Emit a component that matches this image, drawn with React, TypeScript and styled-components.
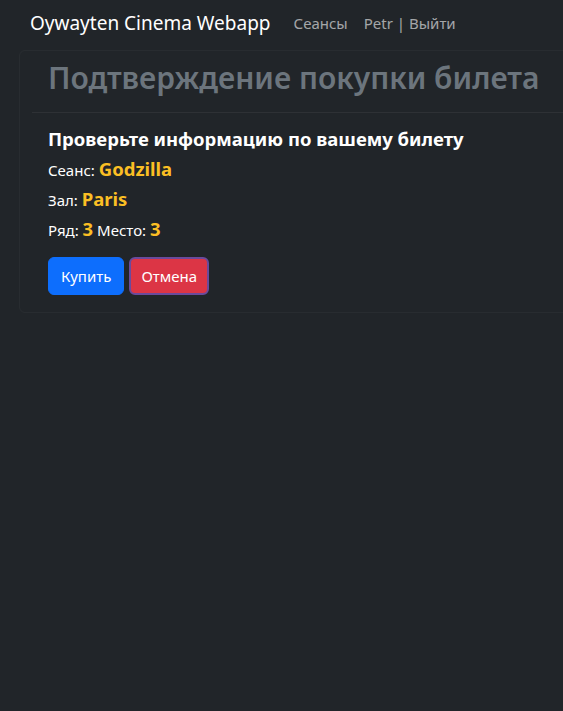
import React from "react";
import styled, { createGlobalStyle } from "styled-components";

const Global = createGlobalStyle`
  html, body { margin: 0; padding: 0; background: #212529; }
  body { font-family: "Noto Sans", "Open Sans", sans-serif; color: #dee2e6; overflow: hidden; }
  #root { min-height: 711px; background: #212529; overflow: hidden; }
`;

const Navbar = styled.nav`
  display: flex;
  align-items: center;
  height: 46px;
  padding: 0 30px;
  gap: 23px;
`;

const Brand = styled.a`
  font-size: 19px;
  color: #fff;
  white-space: nowrap;
`;

const NavLinks = styled.div`
  display: flex;
  gap: 16px;
`;

const NavLink = styled.a`
  font-size: 15px;
  color: rgba(255, 255, 255, 0.6);
  white-space: nowrap;
`;

const Card = styled.section`
  margin: 4px 0 0 19px;
  width: 620px;
  border: 1px solid rgba(255, 255, 255, 0.035);
  border-radius: 6px;
  padding: 0 0 0 12px;
  box-sizing: border-box;
  height: 263px;
`;

const Header = styled.div`
  padding: 9px 16px 16px;
  border-bottom: 1px solid rgba(255, 255, 255, 0.06);
`;

const Title = styled.h1`
  margin: 0;
  font-size: 30px;
  font-weight: 600;
  color: #6c757d;
  line-height: 1.2;
  white-space: nowrap;
`;

const Body = styled.div`
  padding: 15px 16px 14px;
`;

const Subtitle = styled.h5`
  margin: 0 0 5px;
  font-size: 18.5px;
  font-weight: 700;
  color: #fff;
  line-height: 1.2;
`;

const Line = styled.p`
  margin: 0;
  font-size: 15px;
  color: #fff;
  line-height: 28.7px;
`;

const Value = styled.b`
  font-size: 18.5px;
  font-weight: 700;
  color: #fbbf24;
`;

const Actions = styled.div`
  display: flex;
  gap: 5px;
  margin-top: 13px;
`;

const Button = styled.button<{ $variant: "primary" | "danger" }>`
  height: 38px;
  padding: 0 ${(p) => (p.$variant === "primary" ? "12px" : "10px")};
  font-family: inherit;
  font-size: 15px;
  color: #fff;
  border-radius: 6px;
  cursor: pointer;
  background: ${(p) => (p.$variant === "primary" ? "#0d6efd" : "#dc3545")};
  border: ${(p) => (p.$variant === "primary" ? "1px solid #0d6efd" : "2px solid #6a4a9c")};
`;

export default function App() {
  return (
    <>
      <Global />
      <Navbar>
        <Brand>Oywayten Cinema Webapp</Brand>
        <NavLinks>
          <NavLink>Сеансы</NavLink>
          <NavLink>Petr | Выйти</NavLink>
        </NavLinks>
      </Navbar>
      <Card>
        <Header>
          <Title>Подтверждение покупки билета</Title>
        </Header>
        <Body>
          <Subtitle>Проверьте информацию по вашему билету</Subtitle>
          <Line>
            Сеанс: <Value>Godzilla</Value>
          </Line>
          <Line>
            Зал: <Value>Paris</Value>
          </Line>
          <Line>
            Ряд: <Value>3</Value> Место: <Value>3</Value>
          </Line>
          <Actions>
            <Button $variant="primary">Купить</Button>
            <Button $variant="danger">Отмена</Button>
          </Actions>
        </Body>
      </Card>
    </>
  );
}
